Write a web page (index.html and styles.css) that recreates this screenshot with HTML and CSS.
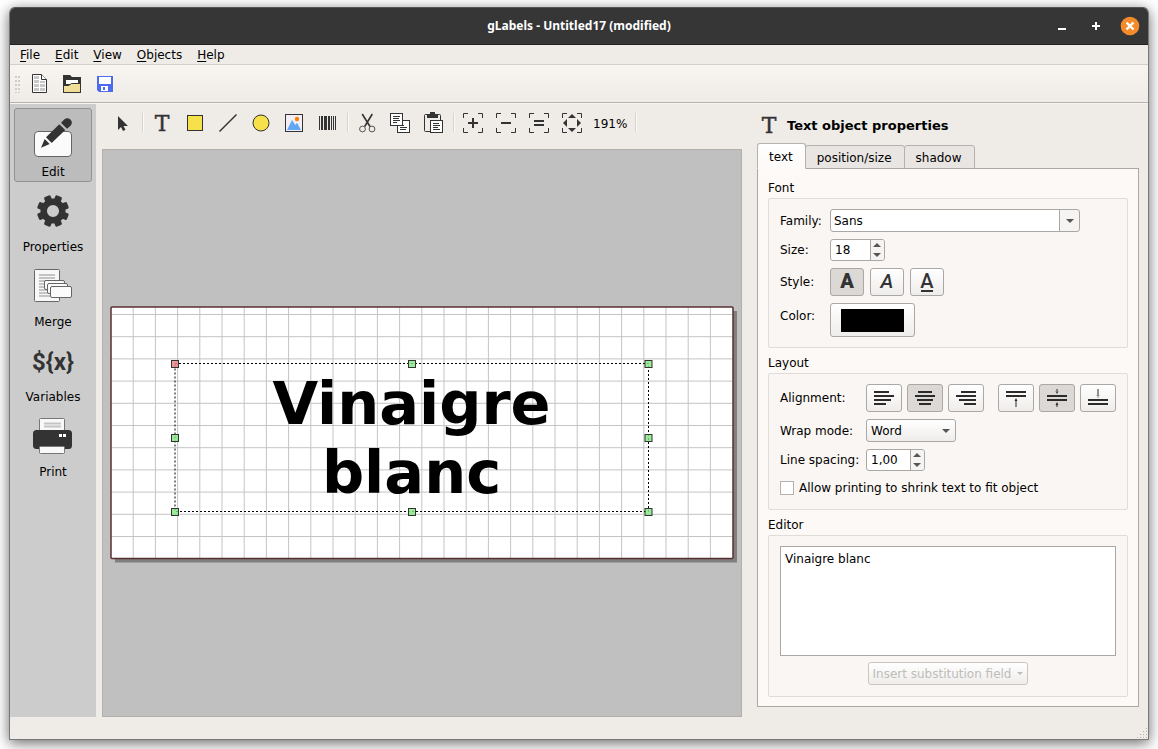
FILE: index.html
```html
<!DOCTYPE html>
<html lang="en">
<head>
<meta charset="utf-8">
<title>gLabels - Untitled17 (modified)</title>
<link rel="stylesheet" href="styles.css">
</head>
<body>
<div class="window">
  <header class="titlebar">
    <h1 class="title">gLabels - Untitled17 (modified)</h1>
    <div class="window-controls">
      <button class="window-button" aria-label="Minimize"><svg width="20" height="20"><path d="M6 13h8" stroke="#fff" stroke-width="2"/></svg></button>
      <button class="window-button" aria-label="Maximize"><svg width="20" height="20"><path d="M6 10h8M10 6v8" stroke="#fff" stroke-width="2"/></svg></button>
      <button class="window-button" aria-label="Close"><svg width="20" height="20"><circle cx="10" cy="10" r="9.3" fill="#f38b2c"/><path d="M6.500 6.500l7 7M13.500 6.500l-7 7" stroke="#fff" stroke-width="2.400"/></svg></button>
    </div>
  </header>

  <nav class="menubar">
    <button class="menu"><u>F</u>ile</button>
    <button class="menu"><u>E</u>dit</button>
    <button class="menu"><u>V</u>iew</button>
    <button class="menu"><u>O</u>bjects</button>
    <button class="menu"><u>H</u>elp</button>
  </nav>

  <div class="main-toolbar">
    <span class="grip"></span>
    <button class="tool" aria-label="New"><svg width="24" height="24"><path d="M5.500 2.500h9l5 5v13h-14z" fill="#fff" stroke="#333"/><path d="M14.500 2.500v5h5" fill="#fff" stroke="#333"/><path d="M7 4h5v3H7zM7 8h5v3H7zM13 9h5v2h-5zM7 12h5v3H7zM13 12h5v3h-5zM7 16h5v3H7zM13 16h5v3h-5z" fill="#c8c8c8"/></svg></button>
    <button class="tool" aria-label="Open"><svg width="24" height="24"><path d="M3 3h7l2 2h9v16H3z" fill="#333"/><path d="M6 8h12v4H6z" fill="#fff"/><path d="M3.500 13.500h5l3-2h9v9h-17z" fill="#f0dd98" stroke="#333"/></svg></button>
    <button class="tool" aria-label="Save"><svg width="24" height="24"><path d="M4 4h16v16H6l-2-2z" fill="#4f6bed"/><path d="M6 5h12v7H6zM8 14h7v5H8z" fill="#fff"/><path d="M10 15h2v3h-2z" fill="#4f6bed"/></svg></button>
  </div>

  <div class="body">
    <nav class="sidebar">
      <button class="page-button selected"><svg width="48" height="48"><rect x="5.500" y="19.500" width="37" height="25" rx="3.500" fill="#fbfbfb" stroke="#666"/><path d="M32 10.700l3.500-3.500a4.500 4.500 0 0 1 6.300 6.300l-3.800 3.200zM30.300 12.300l5.900 5.700-13.500 13-5.700-5.700zM15.700 27l5 5-8.700 3.700z" fill="#333"/></svg>Edit</button>
      <button class="page-button"><svg width="48" height="48"><g transform="translate(24 24)" fill="#333"><circle r="9.300" fill="none" stroke="#333" stroke-width="6.500"/><g id="teeth"><rect x="-3.500" y="-16" width="7" height="6" rx="1.500" transform="rotate(22.5)"/><rect x="-3.500" y="-16" width="7" height="6" rx="1.500" transform="rotate(67.5)"/><rect x="-3.500" y="-16" width="7" height="6" rx="1.500" transform="rotate(112.5)"/><rect x="-3.500" y="-16" width="7" height="6" rx="1.500" transform="rotate(157.5)"/></g><use href="#teeth" transform="rotate(180)"/></g></svg>Properties</button>
      <button class="page-button"><svg width="48" height="48" stroke="#666"><rect x="5.500" y="7.500" width="25" height="32" rx="1" fill="#f8f8f8"/><path d="M10 13h16M10 16h16M10 19h16M10 22h16M10 25h16M10 28h16M10 31h16M10 34h16" stroke="#c4c4c4" stroke-width="2"/><g fill="#fbfbfb"><rect x="15.500" y="18.500" width="20" height="9" rx="1.500"/><rect x="18.500" y="21.500" width="20" height="10" rx="1.500"/><rect x="21.500" y="24.500" width="21" height="11" rx="1.500"/></g></svg>Merge</button>
      <button class="page-button"><svg width="48" height="48"><text x="24" y="33" class="variable-glyph">${x}</text></svg>Variables</button>
      <button class="page-button"><svg width="48" height="48"><rect x="10.500" y="6.500" width="25" height="14" rx="1" fill="#f8f8f8" stroke="#777"/><path d="M15 11.500h17M15 14.500h17" stroke="#c4c4c4" stroke-width="2"/><rect x="4" y="18" width="39" height="19" rx="3.500" fill="#333"/><path d="M30 22h3v3h-3zM34 22h3v3h-3z" fill="#fff"/><rect x="10.500" y="34.500" width="25" height="7" rx="1" fill="#f8f8f8" stroke="#777"/></svg>Print</button>
    </nav>

    <main class="workspace">
      <div class="edit-toolbar">
        <button class="tool" aria-label="Select"><svg width="24" height="24"><path d="M8 5v14l3-3 2 4 2.500-1.300-2-3.700h4.500z" fill="#333"/></svg></button>
        <span class="separator"></span>
        <button class="tool" aria-label="Text"><svg width="24" height="24"><text x="12" y="20" class="serif-glyph">T</text></svg></button>
        <button class="tool" aria-label="Box"><svg width="24" height="24"><rect x="4.500" y="4.500" width="15" height="15" fill="#f7e14a" stroke="#333"/></svg></button>
        <button class="tool" aria-label="Line"><svg width="24" height="24"><path d="M3.500 20.500l17-17" stroke="#333" stroke-width="1.400"/></svg></button>
        <button class="tool" aria-label="Ellipse"><svg width="24" height="24"><circle cx="12" cy="12" r="8" fill="#f7e14a" stroke="#333"/></svg></button>
        <button class="tool" aria-label="Image"><svg width="24" height="24"><rect x="3.500" y="3.500" width="17" height="17" fill="#f1eef6" stroke="#333"/><path d="M5 19l5-10 3.300 5 1.700-2.300 4 7.300z" fill="#62a8f5"/><circle cx="15" cy="8" r="2.200" fill="#ff8000"/></svg></button>
        <button class="tool" aria-label="Barcode"><svg width="24" height="24"><path d="M4 5h1v14H4zM6 5h2v14H6zM9 5h3v14H9zM13 5h2v14h-2zM16 5h1v14h-1zM18 5h1v14h-1zM20 5h1v14h-1z" fill="#333"/></svg></button>
        <span class="separator"></span>
        <button class="tool" aria-label="Cut"><svg width="24" height="24" fill="none" stroke="#333"><path d="M7.200 3l7.800 12.500M17.300 3L9.700 15.500" stroke-width="1.600"/><circle cx="7.500" cy="18" r="2.900" stroke="#555"/><circle cx="17" cy="18" r="2.900" stroke="#555"/></svg></button>
        <button class="tool" aria-label="Copy"><svg width="24" height="24" fill="#fff" stroke="#333"><rect x="9.500" y="9.500" width="12" height="12"/><path d="M12 14.500h4M12 16.500h7M12 18.500h6"/><rect x="2.500" y="2.500" width="12" height="12"/><path d="M5 5.500h7M5 7.500h6M5 9.500h7M5 11.500h4"/></svg></button>
        <button class="tool" aria-label="Paste"><svg width="24" height="24" fill="#fff" stroke="#333"><rect x="3.500" y="3.500" width="16" height="17" rx="1" fill="#f0ede8"/><path d="M6 3h3V1h5v2h3v4H6z" fill="#333" stroke="none"/><rect x="9.500" y="9.500" width="12" height="12"/><path d="M12 12.500h6M12 14.500h7M12 16.500h5M12 18.500h7"/></svg></button>
        <span class="separator"></span>
        <button class="tool" aria-label="Zoom in"><svg width="24" height="24" fill="none" stroke="#333"><path d="M7 2.500H2.500V7M17 2.500h4.500V7M7 21.500H2.500V17M17 21.500h4.500V17"/><path d="M7 12h10M12 7v10" stroke-width="2"/></svg></button>
        <button class="tool" aria-label="Zoom out"><svg width="24" height="24" fill="none" stroke="#333"><path d="M7 2.500H2.500V7M17 2.500h4.500V7M7 21.500H2.500V17M17 21.500h4.500V17"/><path d="M7 12h10" stroke-width="2"/></svg></button>
        <button class="tool" aria-label="Zoom 1 to 1"><svg width="24" height="24" fill="none" stroke="#333"><path d="M7 2.500H2.500V7M17 2.500h4.500V7M7 21.500H2.500V17M17 21.500h4.500V17"/><path d="M7 10h10M7 14h10" stroke-width="2"/></svg></button>
        <button class="tool" aria-label="Zoom to fit"><svg width="24" height="24" fill="none" stroke="#333"><path d="M7 2.500H2.500V7M17 2.500h4.500V7M7 21.500H2.500V17M17 21.500h4.500V17"/><path d="M12 3l4 4H8zM12 21l4-4H8zM3 12l4-4v8zM21 12l-4-4v8z" fill="#333" stroke="none"/></svg></button>
        <output class="zoom-level">191%</output>
        <span class="separator"></span>
      </div>
      <div class="canvas">
        <svg class="label-view" viewBox="0 0 628 258">
          <rect x="5" y="6" width="622" height="251.500" fill="#808080"/>
          <rect x="1" y="2" width="622" height="251.500" fill="#fff"/>
          <path class="grid" d="M23.200 2v251M45.400 2v251M67.600 2v251M89.800 2v251M112 2v251M134.200 2v251M156.400 2v251M178.600 2v251M200.800 2v251M223 2v251M245.200 2v251M267.400 2v251M289.600 2v251M311.800 2v251M334 2v251M356.200 2v251M378.400 2v251M400.600 2v251M422.800 2v251M445 2v251M467.200 2v251M489.400 2v251M511.600 2v251M533.800 2v251M556 2v251M578.200 2v251M600.400 2v251M1 9.500h622M1 31.700h622M1 53.900h622M1 76.100h622M1 98.300h622M1 120.500h622M1 142.700h622M1 164.900h622M1 187.100h622M1 209.300h622M1 231.500h622"/>
          <rect x="1" y="2" width="622" height="251.500" rx="1" fill="none" stroke="#5a2f2f" stroke-width="1.500"/>
          <text x="301.500" y="119" class="label-text">Vinaigre</text>
          <text x="301.500" y="188" class="label-text">blanc</text>
          <rect x="65" y="58.500" width="473.500" height="148" fill="none" stroke="#000" stroke-dasharray="2 2"/>
          <g class="handles">
            <rect class="origin" x="61.500" y="55.500" width="7" height="7"/>
            <rect x="298.500" y="55.500" width="7" height="7"/>
            <rect x="535" y="55.500" width="7" height="7"/>
            <rect x="61.500" y="129.500" width="7" height="7"/>
            <rect x="535" y="129.500" width="7" height="7"/>
            <rect x="61.500" y="203.500" width="7" height="7"/>
            <rect x="298.500" y="203.500" width="7" height="7"/>
            <rect x="535" y="203.500" width="7" height="7"/>
          </g>
        </svg>
      </div>
    </main>

    <aside class="properties">
      <div class="properties-head">
        <svg width="24" height="24"><text x="12" y="20" class="serif-glyph">T</text></svg>
        <h2 class="properties-title">Text object properties</h2>
      </div>
      <div class="tabs" role="tablist">
        <button class="tab active" role="tab" aria-selected="true">text</button>
        <button class="tab" role="tab">position/size</button>
        <button class="tab" role="tab">shadow</button>
      </div>
      <div class="pane">
        <h3 class="group-title">Font</h3>
        <div class="group font-group">
          <label for="family">Family:</label>
          <div class="combo editable"><select id="family"><option>Sans</option></select></div>
          <label for="size">Size:</label>
          <div class="spin size-spin"><input id="size" type="text" value="18"><span class="steps"><button class="step up" aria-label="Increase size"></button><button class="step down" aria-label="Decrease size"></button></span></div>
          <span>Style:</span>
          <div class="style-row">
            <button class="push pressed" aria-label="Bold"><svg width="24" height="26"><text x="12" y="19" class="sans-glyph bold">A</text></svg></button>
            <button class="push" aria-label="Italic"><svg width="24" height="26"><text x="12" y="19" class="sans-glyph italic">A</text></svg></button>
            <button class="push" aria-label="Underline"><svg width="24" height="26"><text x="12" y="19" class="sans-glyph">A</text><path d="M6 22h12" stroke="#333" stroke-width="2"/></svg></button>
          </div>
          <label class="color-label" for="color">Color:</label>
          <button id="color" class="push color-button" aria-label="Text color"><span class="swatch"></span></button>
        </div>

        <h3 class="group-title">Layout</h3>
        <div class="group layout-group">
          <span>Alignment:</span>
          <div class="align-row">
            <div class="align-set">
              <button class="push" aria-label="Left"><svg width="24" height="24" fill="#2b2b2b"><path d="M2 5h15v2H2zM2 9h20v2H2zM2 13h17v2H2zM2 17h12v2H2z"/></svg></button>
              <button class="push pressed" aria-label="Center"><svg width="24" height="24" fill="#2b2b2b"><path d="M5 5h14v2H5zM2 9h20v2H2zM4 13h16v2H4zM6 17h12v2H6z"/></svg></button>
              <button class="push" aria-label="Right"><svg width="24" height="24" fill="#2b2b2b"><path d="M7 5h15v2H7zM2 9h20v2H2zM5 13h17v2H5zM10 17h12v2H10z"/></svg></button>
            </div>
            <div class="align-set">
              <button class="push" aria-label="Top"><svg width="24" height="24" fill="#2b2b2b"><path d="M2 5h20v2H2zM2 9h20v2H2zM11.500 13h1v8h-1zM12 12l1.500 3h-3z"/></svg></button>
              <button class="push pressed" aria-label="Middle"><svg width="24" height="24" fill="#2b2b2b"><path d="M2 9h20v2H2zM2 13h20v2H2zM11.500 3h1v3h-1zM12 8l1.500-3h-3zM11.500 18h1v3h-1zM12 16l1.500 3h-3z"/></svg></button>
              <button class="push" aria-label="Bottom"><svg width="24" height="24" fill="#2b2b2b"><path d="M2 13h20v2H2zM2 17h20v2H2zM11.500 3h1v8h-1zM12 12l1.500-3h-3z"/></svg></button>
            </div>
          </div>
          <label for="wrap">Wrap mode:</label>
          <div class="combo wrap-combo"><select id="wrap"><option>Word</option></select></div>
          <label for="spacing">Line spacing:</label>
          <div class="spin spacing-spin"><input id="spacing" type="text" value="1,00"><span class="steps"><button class="step up" aria-label="Increase spacing"></button><button class="step down" aria-label="Decrease spacing"></button></span></div>
          <label class="check"><input type="checkbox">Allow printing to shrink text to fit object</label>
        </div>

        <h3 class="group-title">Editor</h3>
        <div class="group editor-group">
          <textarea class="editor" aria-label="Editor">Vinaigre blanc</textarea>
          <button class="push insert-button" disabled>Insert substitution field</button>
        </div>
      </div>
    </aside>
  </div>

  <footer class="statusbar">
    <svg width="12" height="12" fill="#b5b1ac"><path d="M10 1h1v1h-1zM7 4h1v1H7zM10 4h1v1h-1zM4 7h1v1H4zM7 7h1v1H7zM10 7h1v1h-1zM1 10h1v1H1zM4 10h1v1H4zM7 10h1v1H7zM10 10h1v1h-1z"/></svg>
  </footer>
</div>
</body>
</html>
```
FILE: styles.css
```css
* { box-sizing: border-box; }

body {
  margin: 0;
  min-height: 100vh;
  padding: 7px 9px 9px;
  display: flex;
  background: #fff;
  color: #000;
  font: 12px/16px "DejaVu Sans", sans-serif;
}

button, input, select, textarea {
  margin: 0;
  font: inherit;
  color: inherit;
}

button { padding: 0; border: 0; background: none; }
svg { display: block; flex: none; }
h1, h2, h3 { margin: 0; font: inherit; }

.window {
  flex: 1;
  min-width: 0;
  display: flex;
  flex-direction: column;
  border: 1px solid #777;
  border-top-color: #555;
  border-radius: 6px 6px 0 0;
  background: #efebe7;
  box-shadow: 0 3px 14px rgba(0, 0, 0, 0.6);
}

.titlebar {
  display: grid;
  grid-template-columns: 1fr auto 1fr;
  align-items: center;
  height: 37px;
  padding-right: 8px;
  border-bottom: 1px solid #222;
  border-radius: 5px 5px 0 0;
  background: #363636;
  color: #fff;
}

.title {
  grid-column: 2;
  padding-left: 8px;
  font: bold 12px/16px "Noto Sans", sans-serif;
}

.window-controls { display: flex; justify-content: flex-end; gap: 14px; }

.menubar {
  display: flex;
  gap: 1px;
  height: 20px;
  padding-left: 3px;
  border-bottom: 1px solid #d3d0cc;
}

.menu { padding: 0 7px; }
.menu u { text-underline-offset: 2px; }

.main-toolbar {
  display: flex;
  height: 38px;
  padding: 7px 5px 0;
  border-bottom: 1px solid #b5b1ad;
  background: linear-gradient(#f8f5f1, #efebe7);
}

.grip {
  width: 5px;
  height: 17px;
  margin: 4px 3px 0 0;
  background: radial-gradient(circle at 1px 1px, #cfcbc6 1px, transparent 1px) 0 0 / 3px 4px;
}

.tool { width: 33px; height: 24px; padding-left: 4px; flex: none; }

.body { flex: 1; display: flex; min-height: 0; border-top: 1px solid #f7f4f1; }

.sidebar {
  width: 86px;
  padding: 4px;
  display: flex;
  flex-direction: column;
  gap: 1px;
  background: #ccc;
}

.page-button {
  display: flex;
  flex-direction: column;
  align-items: center;
  gap: 4px;
  height: 74px;
  padding-top: 3px;
  border: 1px solid transparent;
  border-radius: 3px;
}

.page-button.selected { border-color: #929292; background: #bcbcbc; }

.variable-glyph { font: bold 24px Roboto, sans-serif; text-anchor: middle; fill: #333; }
.serif-glyph { font: 22px "DejaVu Serif", serif; text-anchor: middle; fill: #333; stroke: #333; stroke-width: 0.4px; }
.sans-glyph { font: 500 20px Roboto, sans-serif; text-anchor: middle; fill: #333; }
.sans-glyph.bold { font-weight: 900; }
.sans-glyph.italic { font-style: italic; }

.workspace { flex: 1; min-width: 0; display: flex; flex-direction: column; padding-left: 6px; }

.edit-toolbar { display: flex; height: 45px; padding: 7px 0 0 4px; }

.separator {
  width: 2px;
  height: 19px;
  margin: 2px 2px 0 3px;
  flex: none;
  border-left: 1px solid #d6d2cd;
  background: #fbf9f7;
}

.zoom-level { padding: 0 5px 0 4px; line-height: 26px; }

.canvas {
  flex: 1;
  display: flex;
  align-items: center;
  justify-content: center;
  padding: 2px 3px 0 7px;
  border: 1px solid #b3afab;
  background: #c0c0c0;
}

.label-view { width: 100%; flex: 0 1 auto; }
.grid { fill: none; stroke: #c4c4c4; }
.label-text { font: bold 59px "DejaVu Sans", sans-serif; text-anchor: middle; }
.handles rect { fill: rgba(130, 230, 130, 0.8); stroke: #333; }
.handles .origin { fill: rgba(230, 130, 130, 0.8); }

.properties { width: 406px; padding: 9px 9px 10px 15px; display: flex; flex-direction: column; }
.properties-head { display: flex; align-items: center; gap: 6px; height: 24px; }
.properties-title { font-size: 13px; font-weight: bold; line-height: 18px; padding-top: 1px; }

.tabs { display: flex; align-items: flex-end; height: 32px; margin-bottom: -1px; }

.tab {
  height: 24px;
  margin-left: -1px;
  padding: 1px 12px 0 11px;
  border: 1px solid #b5b1ad;
  border-radius: 3px 3px 0 0;
  background: #e9e5e2;
}

.tab.active {
  z-index: 1;
  height: 26px;
  margin-left: 0;
  border-bottom-color: #fdfaf8;
  background: linear-gradient(#fff, #fdfaf8);
}

.pane {
  flex: 1;
  display: flex;
  flex-direction: column;
  padding: 8px 10px 9px;
  border: 1px solid #aaa7a4;
  background: #fdf9f6;
}

.group-title { padding-top: 1px; line-height: 20px; }

.group {
  margin-bottom: 4px;
  padding: 10px 11px;
  border: 1px solid #e0dcd9;
  border-radius: 2px;
  background: #faf6f3;
}

.font-group, .layout-group {
  display: grid;
  grid-template-columns: 50px 1fr;
  align-items: center;
  justify-items: start;
  row-gap: 7px;
}

.layout-group { grid-template-columns: 86px 1fr; }

.combo { position: relative; width: 250px; }

.combo select {
  display: block;
  width: 100%;
  height: 23px;
  padding: 0 4px;
  appearance: none;
  border: 1px solid #aaa7a4;
  border-radius: 3px;
  background: linear-gradient(#fff, #efedeb);
}

.combo::after {
  content: "";
  position: absolute;
  top: 10px;
  right: 6px;
  border: 4px solid transparent;
  border-top-color: #555;
  border-bottom: 0;
  pointer-events: none;
}

.combo.editable select { background: linear-gradient(#aaa7a4, #aaa7a4) right 19px top / 1px 100% no-repeat, linear-gradient(to right, #fff calc(100% - 20px), #f6f4f2 calc(100% - 20px)); padding-left: 3px; }
.wrap-combo { width: 90px; }

.spin {
  display: flex;
  height: 22px;
  overflow: hidden;
  border: 1px solid #aaa7a4;
  border-radius: 3px;
  background: #fff;
}

.size-spin { width: 55px; }
.spacing-spin { width: 59px; }
.spin input { flex: 1; min-width: 0; padding: 0 4px; border: 0; background: none; }

.steps {
  width: 14px;
  display: flex;
  flex-direction: column;
  padding-right: 1px;
  border-left: 1px solid #aaa7a4;
  background: #f6f4f2;
}

.step { flex: 1; display: grid; place-items: center; }
.step::after { content: ""; border: 4px solid transparent; }
.step.up::after { border-bottom-color: #555; border-top: 0; }
.step.down::after { border-top-color: #555; border-bottom: 0; }

.push {
  display: grid;
  place-items: center;
  height: 28px;
  border: 1px solid #aaa7a4;
  border-radius: 3px;
  background: linear-gradient(#fff, #efedeb);
}

.push.pressed { background: #dcd8d5; }

.style-row { display: flex; gap: 6px; }
.style-row .push { width: 34px; }
.color-label { padding-bottom: 8px; }
.color-button { width: 85px; height: 34px; }
.swatch { width: 63px; height: 23px; background: #000; }

.align-row { display: flex; justify-content: space-between; width: 100%; }
.align-set { display: flex; gap: 5px; }
.align-set .push { width: 36px; }

.check { grid-column: 1 / -1; display: flex; align-items: center; gap: 5px; height: 20px; }
.layout-group { padding-bottom: 11px; }

.check input {
  width: 14px;
  height: 14px;
  appearance: none;
  border: 1px solid #b5b1ad;
  background: #fff;
}

.editor-group { flex: 1; display: flex; flex-direction: column; align-items: center; gap: 6px; margin-bottom: 0; padding-bottom: 11px; }

.editor {
  flex: 1;
  width: 100%;
  min-height: 80px;
  padding: 4px;
  resize: none;
  border: 1px solid #aaa7a4;
  background: #fff;
}

.insert-button {
  display: flex;
  align-items: center;
  gap: 5px;
  height: 23px;
  padding: 0 4px 0 3px;
  border-color: #c8c5c2;
  color: #bfbcb9;
}

.insert-button::after { content: ""; border: 3px solid transparent; border-top-color: #bfbcb9; border-bottom: 0; }

.statusbar { display: flex; align-items: flex-end; justify-content: flex-end; height: 22px; }
```
